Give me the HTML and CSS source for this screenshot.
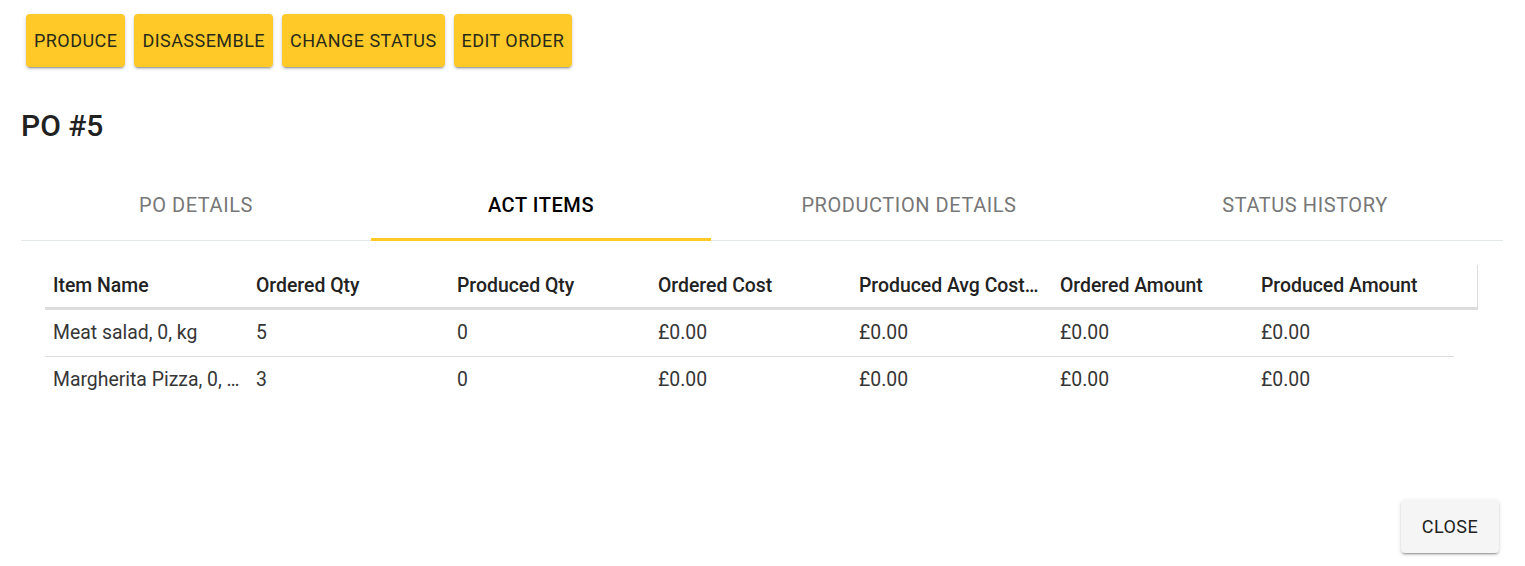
FILE: index.html
```html
<!DOCTYPE html>
<html>

<head>
    <title>PO #5</title>
    <link rel="stylesheet" href="styles.css">
</head>

<body>
    <div class="dialog">
        <div class="toolbar">
            <button class="btn btn-amber">Produce</button>
            <button class="btn btn-amber">Disassemble</button>
            <button class="btn btn-amber">Change Status</button>
            <button class="btn btn-amber">Edit Order</button>
        </div>

        <h2 class="title">PO #5</h2>

        <div class="tabs">
            <div class="tab tab-po">PO Details</div>
            <div class="tab tab-act active">Act Items</div>
            <div class="tab tab-prod">Production Details</div>
            <div class="tab tab-status">Status History</div>
        </div>

        <div class="grid">
            <div class="grid-head">
                <div class="cell">Item Name</div>
                <div class="cell">Ordered Qty</div>
                <div class="cell">Produced Qty</div>
                <div class="cell">Ordered Cost</div>
                <div class="cell">Produced Avg Cost Price</div>
                <div class="cell">Ordered Amount</div>
                <div class="cell">Produced Amount</div>
            </div>
            <div class="grid-row">
                <div class="cell">Meat salad, 0, kg</div>
                <div class="cell">5</div>
                <div class="cell">0</div>
                <div class="cell">£0.00</div>
                <div class="cell">£0.00</div>
                <div class="cell">£0.00</div>
                <div class="cell">£0.00</div>
            </div>
            <div class="grid-row last">
                <div class="cell">Margherita Pizza, 0, pcs</div>
                <div class="cell">3</div>
                <div class="cell">0</div>
                <div class="cell">£0.00</div>
                <div class="cell">£0.00</div>
                <div class="cell">£0.00</div>
                <div class="cell">£0.00</div>
            </div>
        </div>

        <div class="actions">
            <button class="btn btn-grey">Close</button>
        </div>
    </div>
</body>

</html>
```

FILE: styles.css
```css
html, body {
    margin: 0;
    padding: 0;
    background: #fff;
}

body {
    font-family: Roboto, "Liberation Sans", sans-serif;
    color: #212121;
}

.dialog {
    height: 566px;
    box-sizing: border-box;
    padding: 14px 22px 13px 21px;
    display: flex;
    flex-direction: column;
}

.toolbar {
    display: flex;
    gap: 9px;
    padding-left: 5px;
}

.btn {
    height: 53px;
    padding: 0 8px;
    border: none;
    border-radius: 4px;
    font-family: Roboto, "Liberation Sans", sans-serif;
    font-size: 18px;
    font-weight: 400;
    letter-spacing: 0.025em;
    text-transform: uppercase;
    color: #2a2a1a;
    box-shadow: 0 3px 1px -2px rgba(0,0,0,0.2), 0 2px 2px 0 rgba(0,0,0,0.14), 0 1px 5px 0 rgba(0,0,0,0.12);
}

.btn-amber {
    background: #ffca28;
}

.btn-grey {
    background: #f5f5f5;
    color: #222;
    width: 98px;
}

.title {
    margin: 41px 0 0 0;
    font-size: 30px;
    font-weight: 500;
    line-height: 36px;
    color: #212121;
}

.tabs {
    margin-top: 26px;
    display: flex;
    border-bottom: 1px solid #e3e9e9;
}

.tab {
    height: 71px;
    box-sizing: border-box;
    display: flex;
    align-items: center;
    justify-content: center;
    font-size: 20px;
    letter-spacing: 0.02857em;
    text-transform: uppercase;
    color: #777;
    border-bottom: 3px solid transparent;
    margin-bottom: -1px;
    padding-top: 2px;
}

.tab-po { width: 350px; }
.tab-act { width: 340px; }
.tab-prod { width: 396px; }
.tab-status { width: 396px; }

.tab.active {
    color: #000;
    font-weight: 500;
    border-bottom-color: #ffca28;
}

.grid {
    margin: 24px 0 0 24px;
}

.grid-head,
.grid-row {
    display: grid;
    grid-template-columns: 203px repeat(6, 201px);
}

.grid-head {
    width: 1432px;
    height: 42px;
    border-right: 1px solid #ddd;
    border-bottom: 3px solid #ddd;
    font-weight: 500;
    color: #222;
}

.grid-row {
    width: 1409px;
    height: 46px;
    border-bottom: 1px solid #ddd;
    color: #363636;
}

.grid-row.last {
    border-bottom-color: transparent;
}

.cell {
    display: block;
    font-size: 19.4px;
    padding: 0 8px;
    line-height: 46px;
    white-space: nowrap;
    overflow: hidden;
    text-overflow: ellipsis;
    min-width: 0;
}

.grid-row .cell {
    font-weight: 400;
}

.grid-head .cell {
    line-height: 41px;
    padding-right: 12px;
}

.actions {
    margin-top: auto;
    display: flex;
    justify-content: flex-end;
    padding-right: 4px;
}
```
